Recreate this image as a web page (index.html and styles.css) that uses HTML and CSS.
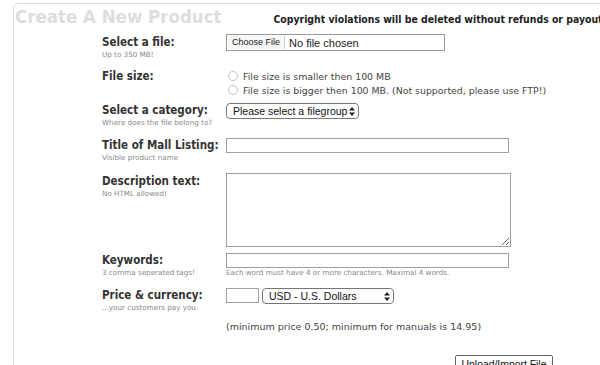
FILE: index.html
```html
<!DOCTYPE html>
<html lang="en">
<head>
  <meta charset="UTF-8">
  <title>Create A New Product</title>
  <link rel="stylesheet" href="styles.css">
</head>
<body>
  <div class="panel">
    <div class="head">
      <h1>Create A New Product</h1>
      <p class="notice">Copyright violations will be deleted without refunds or payouts!</p>
    </div>

    <form class="form">
      <div class="row row-file">
        <div class="label"><b>Select a file:</b><small>Up to 350 MB!</small></div>
        <div class="field">
          <div class="file"><span class="file-btn">Choose File</span><span class="file-name">No file chosen</span></div>
        </div>
      </div>

      <div class="row row-size">
        <div class="label"><b>File size:</b></div>
        <div class="field">
          <label class="radio"><span class="dot"></span>File size is smaller then 100 MB</label>
          <label class="radio"><span class="dot"></span>File size is bigger then 100 MB. (Not supported, please use FTP!)</label>
        </div>
      </div>

      <div class="row row-cat">
        <div class="label"><b>Select a category:</b><small>Where does the file belong to?</small></div>
        <div class="field">
          <div class="select select-cat">Please select a filegroup<svg width="6" height="9" viewBox="0 0 6 9"><path d="M3 0L6 3.5H0z M3 9L6 5.5H0z" fill="#222"/></svg></div>
        </div>
      </div>

      <div class="row row-title">
        <div class="label"><b>Title of Mall Listing:</b><small>Visible product name</small></div>
        <div class="field"><input class="text" type="text"></div>
      </div>

      <div class="row row-desc">
        <div class="label"><b>Description text:</b><small>No HTML allowed!</small></div>
        <div class="field"><textarea class="area"></textarea></div>
      </div>

      <div class="row row-keys">
        <div class="label"><b>Keywords:</b><small>3 comma seperated tags!</small></div>
        <div class="field">
          <input class="text" type="text">
          <small class="hint">Each word must have 4 or more characters. Maximal 4 words.</small>
        </div>
      </div>

      <div class="row row-price">
        <div class="label"><b>Price &amp; currency:</b><small>...your customers pay you.</small></div>
        <div class="field price">
          <input class="text small-input" type="text">
          <div class="select select-cur">USD - U.S. Dollars<svg width="6" height="9" viewBox="0 0 6 9"><path d="M3 0L6 3.5H0z M3 9L6 5.5H0z" fill="#222"/></svg></div>
        </div>
      </div>

      <p class="note">(minimum price 0.50; minimum for manuals is 14.95)</p>

      <div class="actions">
        <button type="button" class="submit">Upload/Import File</button>
      </div>
    </form>
  </div>
</body>
</html>
```

FILE: styles.css
```css
html {
  overflow: hidden;
}

body {
  margin: 0;
  font-family: 'DejaVu Sans', Verdana, sans-serif;
  color: #333;
  background: #fff;
}

.panel {
  width: 980px;
  height: 420px;
  margin: 3px 0 0 13px;
  border: 1px solid #ddd;
  border-radius: 5px;
}

.head {
  display: flex;
  align-items: baseline;
  gap: 52px;
  padding-left: 1px;
}

.head h1 {
  margin: 0;
  font-family: 'DejaVu Sans Condensed', 'DejaVu Sans', sans-serif;
  font-size: 18.5px;
  line-height: 26px;
  color: #ddd;
  white-space: nowrap;
}

.notice {
  margin: 0;
  font-family: 'DejaVu Sans Condensed', 'DejaVu Sans', sans-serif;
  font-size: 10.4px;
  font-weight: bold;
  color: #222;
  white-space: nowrap;
}

.form {
  padding-left: 88px;
}

.row {
  display: grid;
  grid-template-columns: 124px 1fr;
}

.row-file { margin-top: 4px; }
.row-size { margin-top: 8px; }
.row-cat { margin-top: 5px; }
.row-title { margin-top: 9px; }
.row-desc { margin-top: 10px; }
.row-keys { margin-top: 5px; }
.row-price { margin-top: 9px; }

.label b {
  display: block;
  font-family: 'DejaVu Sans Condensed', 'DejaVu Sans', sans-serif;
  font-size: 11.5px;
  line-height: 16px;
  color: #333;
  white-space: nowrap;
}

.label small {
  display: block;
  font-size: 7.2px;
  line-height: 10px;
  color: #888;
}

.field {
  padding-top: 1px;
  font-family: 'Liberation Sans', Arial, sans-serif;
}

.row-file .field,
.row-desc .field {
  padding-top: 0;
}

/* file picker */
.file {
  display: flex;
  align-items: center;
  width: 217px;
  height: 15px;
  border: 1px solid #999;
}

.file-btn {
  height: 13px;
  padding: 0 4px;
  margin-left: 1px;
  border-right: 1px solid #ccc;
  font-size: 9px;
  line-height: 13px;
  color: #222;
  background: #f6f6f6;
}

.file-name {
  padding-left: 4px;
  font-size: 11px;
  color: #222;
}

/* radios */
.radio {
  display: flex;
  align-items: center;
  height: 14px;
  font-family: 'DejaVu Sans', Verdana, sans-serif;
  font-size: 9.4px;
  color: #444;
  white-space: nowrap;
}

.dot {
  width: 8px;
  height: 8px;
  margin: 0 5px 0 2px;
  border: 1px solid #c4c4c4;
  border-radius: 50%;
}

/* selects */
.select {
  display: flex;
  align-items: center;
  justify-content: space-between;
  box-sizing: border-box;
  height: 16px;
  padding: 0 3px 0 6px;
  border: 1px solid #777;
  border-radius: 4px;
  font-size: 10.5px;
  color: #111;
  background: #fff;
  white-space: nowrap;
}

.select-cat {
  width: 133px;
}

.select-cur {
  width: 132px;
}

/* inputs */
.text {
  display: block;
  box-sizing: border-box;
  width: 283px;
  height: 15px;
  margin: 0;
  padding: 0;
  border: 1px solid #a0a0a0;
}

.area {
  display: block;
  box-sizing: border-box;
  width: 285px;
  height: 74px;
  margin: 0;
  border: 1px solid #a0a0a0;
  resize: both;
}

.hint {
  display: block;
  margin-top: 1px;
  font-family: 'DejaVu Sans', Verdana, sans-serif;
  font-size: 7.2px;
  line-height: 8px;
  color: #888;
}

.price {
  display: flex;
  gap: 3px;
}

.small-input {
  width: 33px;
}

.note {
  margin: 7px 0 0 124px;
  font-size: 9.5px;
  line-height: 14px;
  color: #444;
}

.actions {
  margin-top: 21px;
  margin-left: -88px;
}

.submit {
  display: block;
  width: 98px;
  height: 18px;
  margin: 0 auto;
  padding: 0;
  border: 1px solid #666;
  border-radius: 2px;
  font-family: 'Liberation Sans', Arial, sans-serif;
  font-size: 10.4px;
  color: #111;
  background: #fff;
}
```
